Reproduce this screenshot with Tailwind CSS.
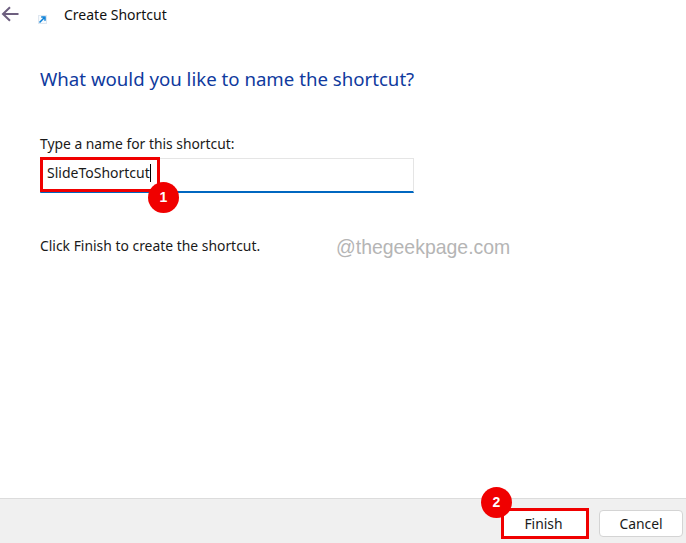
<!DOCTYPE html>
<html lang="en">
<head>
  <meta charset="UTF-8" />
  <title>Create Shortcut</title>
  <script src="https://cdn.jsdelivr.net/npm/@tailwindcss/browser@4"></script>
</head>
<body class="bg-white text-[#1a1a1a] font-['Noto_Sans',sans-serif] overflow-hidden">
  <div class="relative w-[686px] h-[543px] flex flex-col overflow-hidden">
    <!-- title row -->
    <div class="flex items-start h-[42px]">
      <svg class="mt-[5px] ml-[1px] w-[18px] h-[18px]" viewBox="0 0 18 18" fill="none" stroke="#6d5f7f" stroke-width="2">
        <path d="M2 9H17.5M9 2.2 2 9l7 6.8" />
      </svg>
      <svg class="mt-[15px] ml-[19px] w-[9px] h-[9px]" viewBox="0 0 9 9">
        <rect width="9" height="9" fill="#dfe7f0" />
        <rect x="1" y="1" width="7" height="7" fill="#f6fafd" />
        <path d="M1.5 7.5 6 3M3.2 2H7v3.8" fill="none" stroke="#0a7fd6" stroke-width="1.5" />
      </svg>
      <span class="ml-[17px] mt-[5px] text-[14px] leading-[20px] text-[#111]">Create Shortcut</span>
    </div>

    <main class="flex-1 pl-[40px]">
      <h1 class="text-[18.65px] leading-[26px] mt-[24px] text-[#0f3a9e]">What would you like to name the shortcut?</h1>
      <p class="mt-[43px] text-[13.85px] leading-[18px]">Type a name for this shortcut:</p>
      <div class="mt-[5px] w-[374px] h-[35px] border border-[#e5e5e5] border-b-2 border-b-[#0067c0] flex items-center pl-[6px] text-[14px] pb-[5px]">
        <span>SlideToShortcut</span><span class="w-px h-[18px] bg-black"></span>
      </div>
      <p class="mt-[44px] text-[13.9px] leading-[18px]">Click Finish to create the shortcut.</p>
    </main>

    <!-- footer -->
    <footer class="h-[45px] bg-[#f0f0f0] border-t border-[#dcdcdc] flex justify-end items-start gap-[13px] pt-[11px] pr-[3px]">
      <button class="w-[85px] h-[27px] bg-white rounded-[3px] text-[13.9px] pt-[2px]">Finish</button>
      <button class="w-[84px] h-[27px] bg-white rounded-[4px] border border-[#d4d4d4] text-[13.9px] pt-[2px]">Cancel</button>
    </footer>

    <!-- annotations -->
    <span class="absolute left-[336px] top-[233px] text-[19.45px] leading-[28px] text-[#b5b5b5] font-['Liberation_Sans',sans-serif]">@thegeekpage.com</span>
    <div class="absolute left-[40px] top-[157px] w-[120px] h-[35px] border-[3px] border-[#f00000]"></div>
    <div class="absolute left-[148px] top-[182px] w-[31px] h-[31px] rounded-full bg-[#f00000] text-white text-[14px] font-bold flex items-center justify-center font-['Liberation_Sans',sans-serif]">1</div>
    <div class="absolute left-[501px] top-[508px] w-[88px] h-[31px] border-[3px] border-[#f00000]"></div>
    <div class="absolute left-[481px] top-[487px] w-[31px] h-[31px] rounded-full bg-[#f00000] text-white text-[14px] font-bold flex items-center justify-center font-['Liberation_Sans',sans-serif]">2</div>
  </div>
</body>
</html>
